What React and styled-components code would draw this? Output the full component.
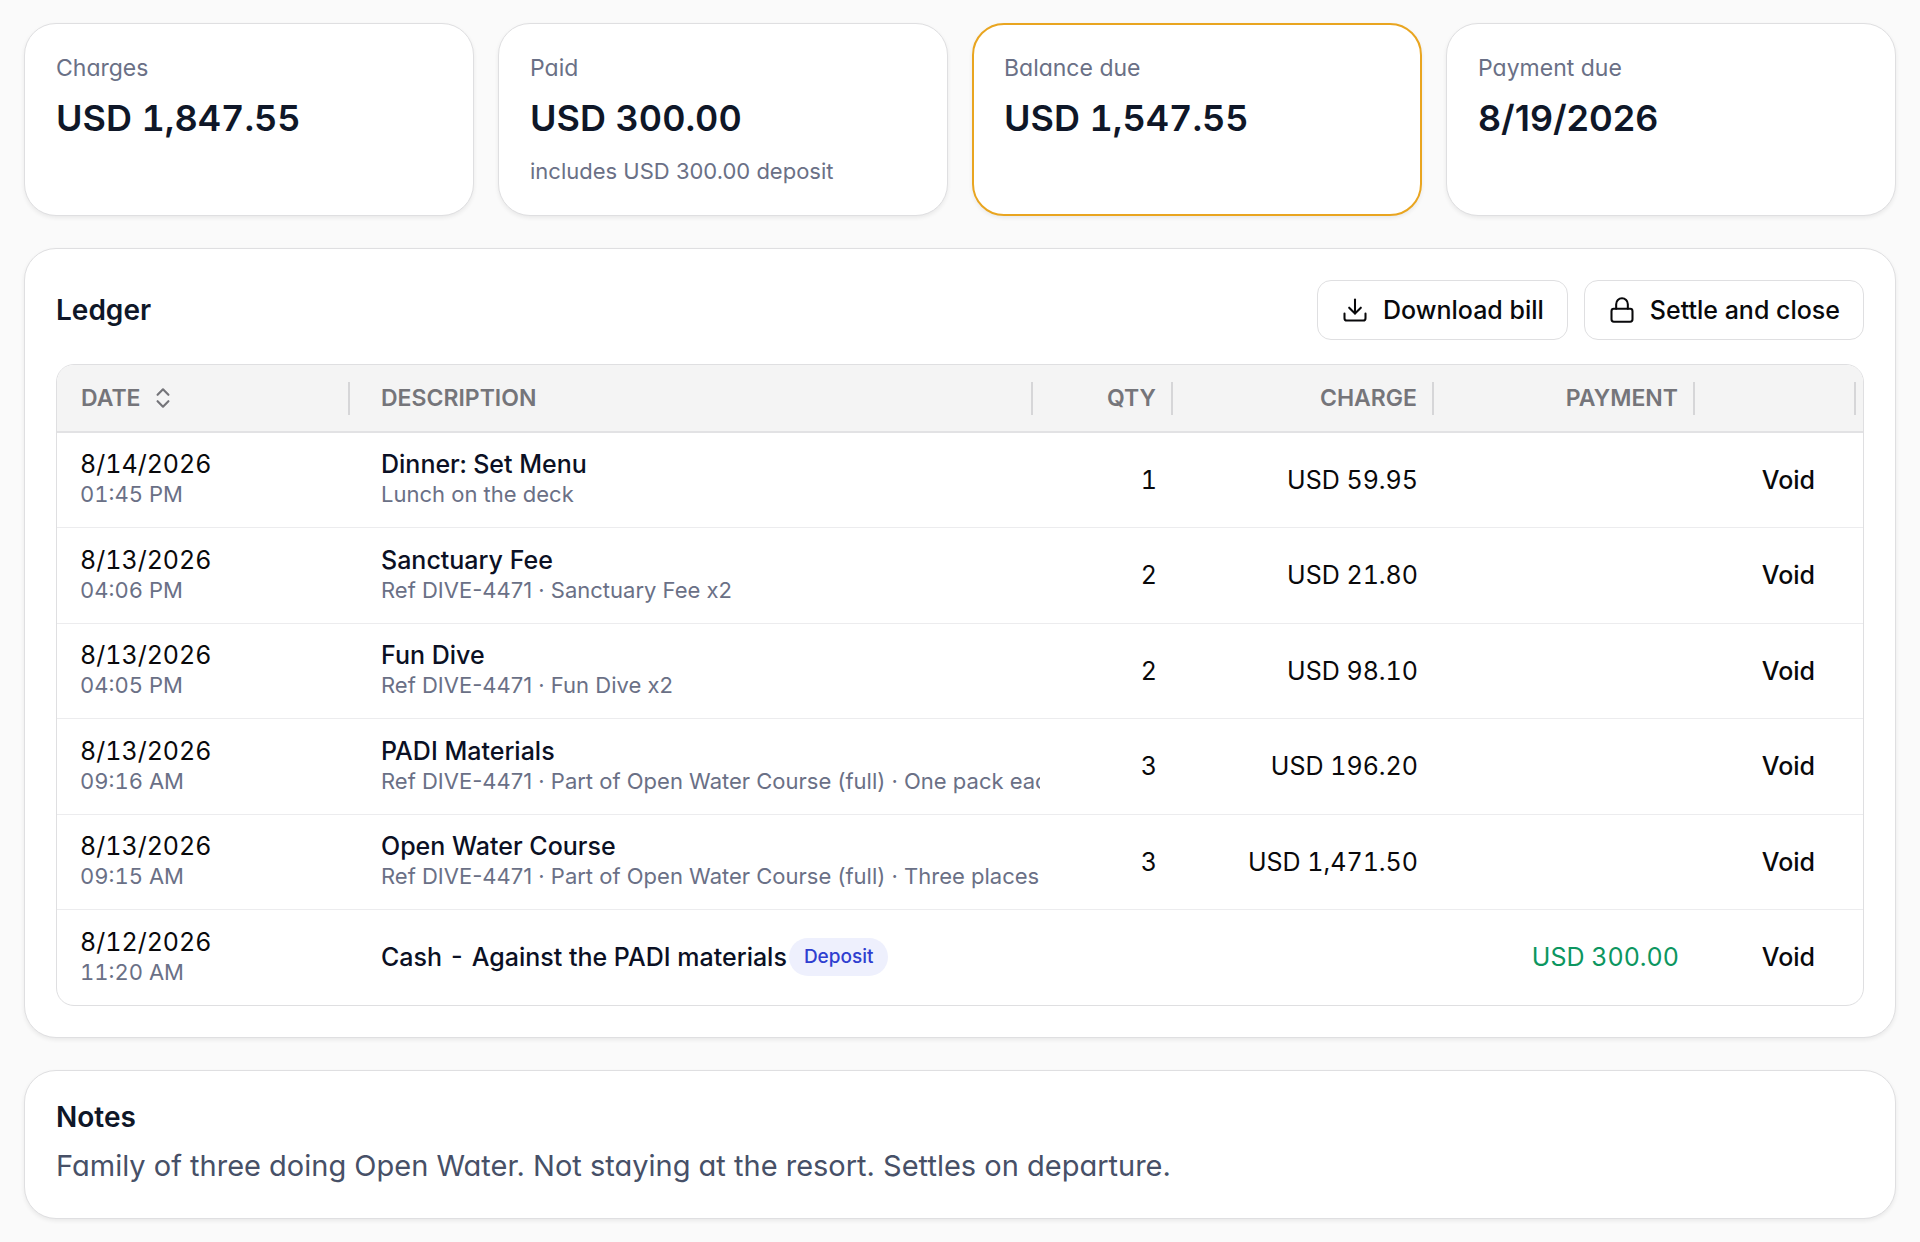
import React from 'react'
import styled, { createGlobalStyle } from 'styled-components';
import { ChevronsUpDown, Download, Lock } from 'lucide-react';

const GlobalStyle = createGlobalStyle`
    * {
        box-sizing: border-box;
    }
    body {
        background-color: #fafafa;
        color: #09090b;
        font-family: Inter, "Liberation Sans", sans-serif;
        margin: 0;
    }
`;

const Page = styled.main`
    display: flex;
    flex-direction: column;
    gap: 32px;
    padding: 23px 24px;
`;

const Stats = styled.section`
    display: grid;
    gap: 24px;
    grid-template-columns: repeat(4, 1fr);
`;

const Card = styled.div`
    background-color: #fff;
    border: ${({ $highlight }) => ($highlight ? '2px solid #e9a520' : '1px solid #dfdfe1')};
    border-radius: 32px;
    box-shadow: 0 2px 4px rgba(0, 0, 0, 0.07);
    padding: ${({ $highlight }) => ($highlight ? '30px' : '31px')};
`;

const StatLabel = styled.div`
    color: #6a7086;
    font-feature-settings: "cv11";
    font-size: 23px;
    line-height: 27px;
`;

const StatValue = styled.div`
    color: #0f1728;
    font-size: 36px;
    font-variant-numeric: ${({ $money }) => ($money ? 'tabular-nums' : 'normal')};
    font-weight: 600;
    line-height: 48px;
    margin-top: 12px;
`;

const StatHint = styled.div`
    color: #6a7086;
    font-size: 22px;
    line-height: 26px;
    margin-top: 16px;
`;

const PanelHeader = styled.header`
    align-items: center;
    display: flex;
    justify-content: space-between;
    margin-bottom: 24px;
`;

const Title = styled.h2`
    color: #0f1728;
    font-size: 28px;
    font-weight: 600;
    line-height: 30px;
    margin: 0;
`;

const Actions = styled.div`
    display: flex;
    gap: 16px;
`;

const Button = styled.button`
    align-items: center;
    background-color: #fff;
    border: 1px solid #dfdfe1;
    border-radius: 14px;
    color: #09090b;
    display: inline-flex;
    font: 500 25px/30px Inter, sans-serif;
    gap: 14px;
    height: 60px;
    padding: 0 23px;
`;

const TableFrame = styled.div`
    border: 1px solid #dfdfe1;
    border-radius: 18px;
    overflow: hidden;
`;

const Table = styled.table`
    border-collapse: collapse;
    table-layout: fixed;
    width: 100%;
`;

const Col = styled.col`
    width: ${({ $width }) => $width};
`;

const Th = styled.th`
    background-color: #f4f4f4;
    border-bottom: 2px solid #e2e2e4;
    color: #75757a;
    font-size: 23px;
    font-weight: 600;
    height: 67px;
    padding: 0 7px 0 24px;
    text-align: left;
`;

const ThInner = styled.div`
    align-items: center;
    border-right: 2px solid #d6d6d8;
    display: flex;
    height: 33px;
    justify-content: ${({ $right }) => ($right ? 'flex-end' : 'flex-start')};
    padding-right: 15px;
`;

const SortButton = styled.button`
    align-items: center;
    background: none;
    border: 0;
    color: inherit;
    display: inline-flex;
    font: inherit;
    gap: 9px;
    padding: 0;
`;

const Row = styled.tr`
    height: 95px;
    &:nth-child(even) {
        height: 96px;
    }
    & + & {
        border-top: 1px solid #ececee;
    }
`;

const Td = styled.td`
    color: ${({ $green }) => ($green ? '#0c9660' : '#09090b')};
    font-size: 25px;
    font-variant-numeric: tabular-nums;
    line-height: 32px;
    overflow: hidden;
    padding: 0 23px;
    text-align: ${({ $right }) => ($right ? 'right' : 'left')};
    vertical-align: middle;
    white-space: nowrap;
`;

const DescriptionCell = styled(Td)`
    padding: 0 0 0 24px;
`;

const Name = styled.div`
    align-items: center;
    color: #0b1024;
    display: flex;
    font-weight: 500;
    gap: 2px;
`;

const Small = styled.div`
    color: #6a7086;
    font-size: 22px;
    line-height: 28px;
    padding-bottom: 3px;
`;

const Detail = styled(Small)`
    font-variant-numeric: normal;
`;

const Badge = styled.span`
    background-color: #eef0fd;
    border-radius: 19px;
    color: #2f3fd0;
    font-size: 19px;
    font-weight: 500;
    line-height: 38px;
    padding: 0 15px;
`;

const VoidButton = styled.button`
    background: none;
    border: 0;
    color: #09090b;
    font: 500 25px/32px Inter, sans-serif;
    padding: 0 25px;
`;

const NotesText = styled.p`
    color: #475067;
    font-feature-settings: "cv11";
    font-size: 29px;
    line-height: 42px;
    margin: 13px 0 0;
`;

const stats = [
    { label: 'Charges', value: 'USD 1,847.55', money: true },
    { label: 'Paid', value: 'USD 300.00', money: true, hint: 'includes USD 300.00 deposit' },
    { label: 'Balance due', value: 'USD 1,547.55', money: true, highlight: true },
    { label: 'Payment due', value: '8/19/2026' },
];

const entries = [
    { id: 6, date: '8/14/2026', time: '01:45 PM', name: 'Dinner: Set Menu', detail: 'Lunch on the deck', qty: 1, charge: 'USD 59.95' },
    { id: 5, date: '8/13/2026', time: '04:06 PM', name: 'Sanctuary Fee', detail: 'Ref DIVE-4471 · Sanctuary Fee x2', qty: 2, charge: 'USD 21.80' },
    { id: 4, date: '8/13/2026', time: '04:05 PM', name: 'Fun Dive', detail: 'Ref DIVE-4471 · Fun Dive x2', qty: 2, charge: 'USD 98.10' },
    { id: 3, date: '8/13/2026', time: '09:16 AM', name: 'PADI Materials', detail: 'Ref DIVE-4471 · Part of Open Water Course (full) · One pack each', qty: 3, charge: 'USD 196.20' },
    { id: 2, date: '8/13/2026', time: '09:15 AM', name: 'Open Water Course', detail: 'Ref DIVE-4471 · Part of Open Water Course (full) · Three places', qty: 3, charge: 'USD 1,471.50' },
    { id: 1, date: '8/12/2026', time: '11:20 AM', name: 'Cash - Against the PADI materials', badge: 'Deposit', payment: 'USD 300.00' },
];

function App() {

    return (
        <>
            <GlobalStyle />
            <Page>
                <Stats>
                    {stats.map((item) => (
                        <Card key={item.label} $highlight={item.highlight}>
                            <StatLabel>{item.label}</StatLabel>
                            <StatValue $money={item.money}>{item.value}</StatValue>
                            {item.hint && <StatHint>{item.hint}</StatHint>}
                        </Card>
                    ))}
                </Stats>

                <Card as="section">
                    <PanelHeader>
                        <Title>Ledger</Title>
                        <Actions>
                            <Button type="button"><Download size={28} strokeWidth={1.75} />Download bill</Button>
                            <Button type="button"><Lock size={28} strokeWidth={1.75} />Settle and close</Button>
                        </Actions>
                    </PanelHeader>
                    <TableFrame>
                        <Table>
                            <colgroup>
                                <Col $width="300px" />
                                <Col $width="auto" />
                                <Col $width="140px" />
                                <Col $width="261px" />
                                <Col $width="261px" />
                                <Col $width="161px" />
                            </colgroup>
                            <thead>
                                <tr>
                                    <Th><ThInner><SortButton type="button">DATE<ChevronsUpDown size={26} strokeWidth={2} /></SortButton></ThInner></Th>
                                    <Th><ThInner>DESCRIPTION</ThInner></Th>
                                    <Th><ThInner $right>QTY</ThInner></Th>
                                    <Th><ThInner $right>CHARGE</ThInner></Th>
                                    <Th><ThInner $right>PAYMENT</ThInner></Th>
                                    <Th><ThInner /></Th>
                                </tr>
                            </thead>
                            <tbody>
                                {entries.map((item) => (
                                    <Row key={item.id}>
                                        <Td>{item.date}<Small>{item.time}</Small></Td>
                                        <DescriptionCell>
                                            <Name>{item.name}{item.badge && <Badge>{item.badge}</Badge>}</Name>
                                            {item.detail && <Detail>{item.detail}</Detail>}
                                        </DescriptionCell>
                                        <Td $right>{item.qty}</Td>
                                        <Td $right>{item.charge}</Td>
                                        <Td $right $green>{item.payment}</Td>
                                        <Td $right><VoidButton type="button">Void</VoidButton></Td>
                                    </Row>
                                ))}
                            </tbody>
                        </Table>
                    </TableFrame>
                </Card>

                <Card as="section">
                    <Title>Notes</Title>
                    <NotesText>Family of three doing Open Water. Not staying at the resort. Settles on departure.</NotesText>
                </Card>
            </Page>
        </>
    )
}

export default App;
